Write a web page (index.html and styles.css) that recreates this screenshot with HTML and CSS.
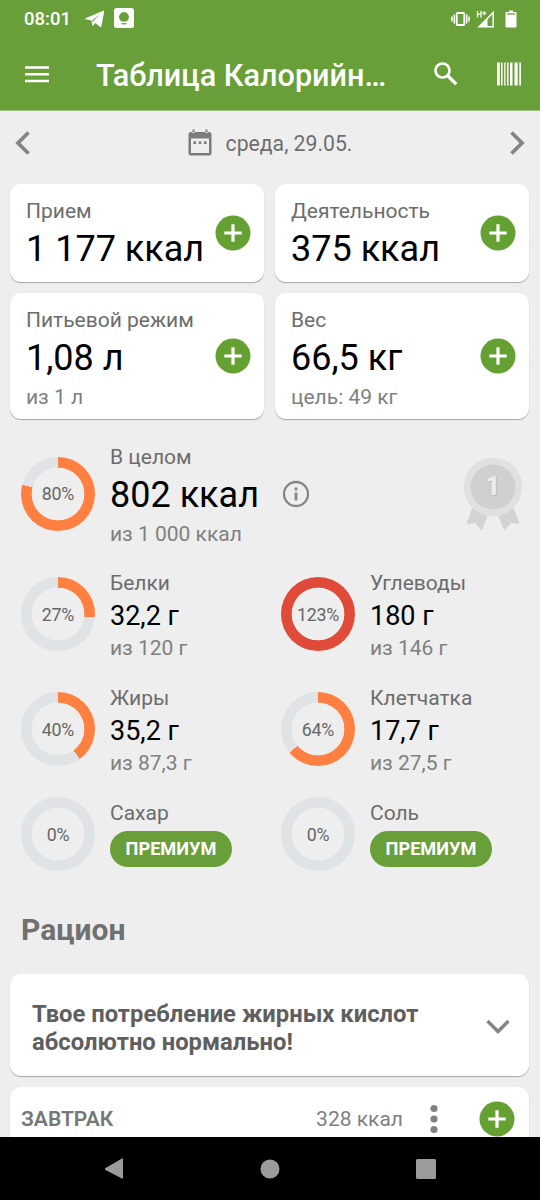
FILE: index.html
```
<!DOCTYPE html>
<html lang="ru">
<head>
	<meta charset="UTF-8">
	<meta name="viewport" content="width=device-width, initial-scale=1.0">
	<title>Таблица Калорийности</title>
	<link rel="stylesheet" href="styles.css">
</head>
<body>
	<svg class="sprite" width="0" height="0">
		<symbol id="plus" viewBox="0 0 36 36">
			<circle cx="18" cy="18" r="17.5" fill="#64a032"/>
			<path d="M18 9.3v17.4M9.3 18h17.4" stroke="#fff" stroke-width="3.2"/>
		</symbol>
	</svg>
	<div class="phone">
		<header class="header">
			<div class="status">
				<span class="clock">08:01</span>
				<svg class="telegram" width="20" height="18" viewBox="0 0 20 18">
					<path d="M.5 8.2 18.2.7c.8-.3 1.2.1 1 .9l-2.7 14.5c-.2.9-.8 1.1-1.5.6L10.300 13l-2.300 2.600c-.4.4-.7.3-.8-.2l-.7-5L.6 9.200C0 9 0 8.500.5 8.200zM7.300 10.200l.6 3 .6-2.400 7-6.800z"/>
				</svg>
				<svg class="app" width="20" height="20" viewBox="0 0 20 20">
					<rect width="20" height="20" rx="2.5"/>
					<path d="M7.600 13.500a5 5 0 1 1 4.800 0z" fill="#689f38"/>
					<path d="M7.500 15.700h5" stroke="#689f38" stroke-width="1.3"/>
				</svg>
				<svg class="vibrate" width="19" height="16" viewBox="0 0 19 16">
					<rect x="5.700" y="2" width="7.600" height="12" rx="1" fill="none" stroke="#fff" stroke-width="1.8"/>
					<path d="M3.300 3.500v9M1 5.500v5M15.700 3.500v9M18 5.500v5" stroke="#fff" stroke-width="1.5"/>
				</svg>
				<svg class="signal" width="19" height="18" viewBox="0 0 19 18">
					<path d="M3 16.700 17.200 2.500v14.200z" fill="none" stroke="#fff" stroke-width="1.5"/>
					<path d="M3 16.700 11.500 8.200v8.500z"/>
					<path d="M1.500 1v6.500M5 1v6.500M1.500 4.200H5M6.300 3.200h4M8.300 1.200v4" stroke="#fff" stroke-width="1.3"/>
				</svg>
				<svg class="battery" width="12" height="18" viewBox="0 0 12 18">
					<path d="M4 .5h4V2h2.500c.7 0 1 .4 1 1v13.300c0 .7-.3 1.200-1 1.200h-9c-.7 0-1-.5-1-1.200V3c0-.6.3-1 1-1H4z"/>
					<path d="M2 4h8" stroke="#689f38" stroke-width="1.3"/>
				</svg>
			</div>
			<div class="toolbar">
				<svg class="menu" width="26" height="18" viewBox="0 0 26 18">
					<path d="M1 2.500h24M1 9.300h24M1 16h24" stroke="#fff" stroke-width="2.5"/>
				</svg>
				<h1 class="title">Таблица Калорийн…</h1>
				<svg class="search" width="24" height="24" viewBox="0 0 24 24">
					<circle cx="8.500" cy="8.500" r="7" fill="none" stroke="#fff" stroke-width="2.7"/>
					<path d="m13.500 13.500 8.700 8.700" stroke="#fff" stroke-width="3.3"/>
				</svg>
				<svg class="barcode" width="26" height="24" viewBox="0 0 26 24">
					<path d="M1 .5h2.800v23H1zM5 .5h1.600v23H5zM8.200.5h1.300v23H8.200zM11 .5h1.500v23H11zM14 .5h2.500v23H14zM18.500.5h3.200v23h-3.200zM23.300.5h1.700v23h-1.700z"/>
				</svg>
			</div>
		</header>

		<main class="content">
			<div class="date-nav">
				<svg width="16" height="24" viewBox="0 0 16 24">
					<path d="M13.500 1.500 3 12l10.500 10.500" fill="none" stroke="#858585" stroke-width="3.8"/>
				</svg>
				<div class="date">
					<svg width="24" height="27" viewBox="0 0 24 27">
						<path d="M3 3h18a2.500 2.500 0 0 1 2.500 2.500V24a2.500 2.500 0 0 1-2.500 2.500H3A2.500 2.500 0 0 1 .5 24V5.500A2.500 2.500 0 0 1 3 3zm0 6.500V24h18V9.500zM4.500.5h2V4h-2zM17.500.5h2V4h-2z" fill="#7c7c7c" fill-rule="evenodd"/>
						<path d="M5.500 12.300h2.600v2.600H5.500zM10.700 12.300h2.600v2.600h-2.600zM15.900 12.300h2.600v2.600h-2.600z" fill="#7c7c7c"/>
					</svg>
					<span>среда, 29.05.</span>
				</div>
				<svg width="16" height="24" viewBox="0 0 16 24">
					<path d="M2.500 1.500 13 12 2.500 22.500" fill="none" stroke="#858585" stroke-width="3.8"/>
				</svg>
			</div>

			<div class="cards">
				<div class="card">
					<div>
						<div class="label">Прием</div>
						<div class="value">1 177 ккал</div>
					</div>
					<svg class="plus"><use href="#plus"/></svg>
				</div>
				<div class="card">
					<div>
						<div class="label">Деятельность</div>
						<div class="value">375 ккал</div>
					</div>
					<svg class="plus"><use href="#plus"/></svg>
				</div>
				<div class="card">
					<div>
						<div class="label">Питьевой режим</div>
						<div class="value">1,08 л</div>
						<div class="goal">из 1 л</div>
					</div>
					<svg class="plus"><use href="#plus"/></svg>
				</div>
				<div class="card">
					<div>
						<div class="label">Вес</div>
						<div class="value">66,5 кг</div>
						<div class="goal">цель: 49 кг</div>
					</div>
					<svg class="plus"><use href="#plus"/></svg>
				</div>
			</div>

			<div class="total">
				<div class="ring" style="--percent: 79"><span>80%</span></div>
				<div>
					<div class="label">В целом</div>
					<div class="value">802 ккал</div>
					<div class="goal">из 1 000 ккал</div>
				</div>
				<svg class="info" width="28" height="28" viewBox="0 0 28 28">
					<circle cx="14" cy="14" r="12" fill="none" stroke="#858585" stroke-width="2.3"/>
					<path d="M14 7.600v3M14 12.500v8" stroke="#858585" stroke-width="2.8"/>
				</svg>
				<svg class="medal" width="60" height="76" viewBox="0 0 60 76">
					<path d="m10 49-6.500 18 8.500-1 6.800 7.500 8-20zM50 49l6.500 18-8.500-1-6.800 7.500-8-20z" fill="#d3d3d3"/>
					<circle cx="30" cy="30" r="29.3" fill="#e0e0e0"/>
					<circle cx="30" cy="30" r="22.5" fill="#d0d0d0"/>
					<text x="31" y="39" class="medal-shade">1</text>
					<text x="30" y="38" class="medal-number">1</text>
				</svg>
			</div>

			<div class="nutrients">
				<div class="nutrient">
					<div class="ring" style="--percent: 26.5"><span>27%</span></div>
					<div>
						<div class="label">Белки</div>
						<div class="amount">32,2 г</div>
						<div class="goal">из 120 г</div>
					</div>
				</div>
				<div class="nutrient">
					<div class="ring over" style="--percent: 100"><span>123%</span></div>
					<div>
						<div class="label">Углеводы</div>
						<div class="amount">180 г</div>
						<div class="goal">из 146 г</div>
					</div>
				</div>
				<div class="nutrient">
					<div class="ring" style="--percent: 40"><span>40%</span></div>
					<div>
						<div class="label">Жиры</div>
						<div class="amount">35,2 г</div>
						<div class="goal">из 87,3 г</div>
					</div>
				</div>
				<div class="nutrient">
					<div class="ring" style="--percent: 64"><span>64%</span></div>
					<div>
						<div class="label">Клетчатка</div>
						<div class="amount">17,7 г</div>
						<div class="goal">из 27,5 г</div>
					</div>
				</div>
				<div class="nutrient locked">
					<div class="ring" style="--percent: 0"><span>0%</span></div>
					<div>
						<div class="label">Сахар</div>
						<div class="premium">ПРЕМИУМ</div>
					</div>
				</div>
				<div class="nutrient locked">
					<div class="ring" style="--percent: 0"><span>0%</span></div>
					<div>
						<div class="label">Соль</div>
						<div class="premium">ПРЕМИУМ</div>
					</div>
				</div>
			</div>

			<h2 class="section-title">Рацион</h2>

			<div class="tip">
				<p>Твое потребление жирных кислот абсолютно нормально!</p>
				<svg width="24" height="16" viewBox="0 0 24 16">
					<path d="M1.500 2 12 12.500 22.500 2" fill="none" stroke="#858585" stroke-width="3.5"/>
				</svg>
			</div>

			<div class="meal">
				<span class="meal-name">ЗАВТРАК</span>
				<span class="meal-energy">328 ккал</span>
				<svg class="dots" width="8" height="30" viewBox="0 0 8 30">
					<circle cx="4" cy="4.5" r="3.6"/>
					<circle cx="4" cy="15" r="3.6"/>
					<circle cx="4" cy="25.5" r="3.6"/>
				</svg>
				<svg class="plus"><use href="#plus"/></svg>
			</div>
		</main>

		<nav class="system-nav">
			<svg width="20" height="22" viewBox="0 0 20 22"><path d="M1.500 10 18 .5q1-.5 1 .5v19q0 1-1 .5L1.500 12q-1.500-1 0-2z"/></svg>
			<svg width="20" height="22" viewBox="0 0 20 22"><circle cx="10" cy="11" r="9.5"/></svg>
			<svg width="20" height="22" viewBox="0 0 20 22"><rect y="1" width="20" height="20" rx="1.5"/></svg>
		</nav>
	</div>
</body>
</html>
```
FILE: styles.css
```
html, body {
	padding: 0;
	margin: 0;
}

body {
	font-family: Roboto, sans-serif;
	font-size: 21px;
	line-height: 28px;
	color: #6f6f6f;
	background: #000;
}

svg {
	display: block;
	flex: none;
}

.sprite {
	position: absolute;
}

.phone {
	display: flex;
	flex-direction: column;
	width: 540px;
	height: 1200px;
	overflow: hidden;
	background: #eee;
}


/* Header */

.header {
	flex: none;
	height: 111px;
	box-sizing: border-box;
	border-bottom: 1px solid #9dbf80;
	color: #fff;
	background: #689f38;
}

.header svg {
	fill: #fff;
}

.status {
	display: flex;
	align-items: center;
	height: 37px;
	padding: 0 23px 0 24px;
}

.clock {
	width: 61px;
	margin-top: 1px;
	font-size: 18.5px;
	font-weight: 500;
}

.app {
	margin: -1px auto 0 9px;
}

.signal {
	margin: 0 10px 0 6px;
}

.toolbar {
	display: flex;
	align-items: center;
	height: 74px;
	padding: 0 18px 0 24px;
}

.title {
	flex: 1;
	margin: 4px 0 0 46px;
	font-size: 30.6px;
	font-weight: 500;
	line-height: 36px;
	white-space: nowrap;
}

.barcode {
	margin-left: 38px;
}


/* Content */

.content {
	flex: 1;
	min-height: 0;
	overflow: hidden;
}

.date-nav {
	display: flex;
	align-items: center;
	justify-content: space-between;
	height: 63px;
	padding: 0 15px;
}

.date {
	display: flex;
	align-items: center;
	gap: 14px;
}

.date span {
	margin-top: 3px;
	font-size: 21.2px;
}

.cards {
	display: grid;
	grid-template-columns: 1fr 1fr;
	grid-template-rows: 98px 126px;
	gap: 11px;
	padding: 10px 11px 0 10px;
}

.card, .tip, .meal {
	display: flex;
	align-items: center;
	border-radius: 11px;
	background: #fff;
	box-shadow: 0 1px 1px rgba(0, 0, 0, .3);
}

.card {
	justify-content: space-between;
	padding: 0 13px 0 16px;
	white-space: nowrap;
}

.card .label {
	padding-top: 4px;
}

.plus {
	width: 36px;
	height: 36px;
}

.label {
	color: #6c6c6c;
}

.goal {
	color: #808080;
}

.value {
	font-size: 36px;
	line-height: 49px;
	color: #000;
}

.amount {
	padding-top: 1px;
	font-size: 27px;
	line-height: 36px;
	color: #000;
}

.total {
	display: flex;
	align-items: center;
	height: 104px;
	padding: 24px 17px 0 21px;
}

.total .ring, .info {
	margin-top: -3px;
}

.total .value {
	margin-right: 23px;
}

.medal {
	margin: -1px 0 0 auto;
}

.medal text {
	font-size: 26px;
	font-weight: 700;
	text-anchor: middle;
}

.medal-number {
	fill: #eee;
}

.medal-shade {
	fill: #bbb;
}

.ring {
	display: flex;
	flex: none;
	align-items: center;
	justify-content: center;
	width: 74px;
	height: 74px;
	margin-right: 15px;
	border-radius: 50%;
	font-size: 17.8px;
	letter-spacing: -.2px;
	color: #666;
	background:
		radial-gradient(circle, #eee 26px, transparent 26.7px),
		conic-gradient(#ff8040 calc(var(--percent) * 1%), #dfe3e6 0);
}

.ring span {
	margin-top: 1px;
}

.ring.over {
	background:
		radial-gradient(circle, #eee 26px, transparent 26.7px),
		#e04a38;
}

.nutrients {
	display: grid;
	grid-template-columns: 260px 1fr;
	grid-template-rows: 93px 93px 74px;
	row-gap: 22px;
	padding: 22px 0 0 21px;
}

.nutrient {
	display: flex;
	align-items: flex-start;
}

.nutrient .ring {
	margin-top: 8px;
}

.locked .ring {
	margin-top: -2px;
}

.premium {
	width: 122px;
	margin-top: 4px;
	border-radius: 18px;
	font-size: 18.2px;
	font-weight: 700;
	line-height: 36px;
	text-align: center;
	color: #fff;
	background: #689f38;
}

.section-title {
	margin: 39px 0 26px 21px;
	font-size: 30px;
	font-weight: 700;
	line-height: 36px;
	color: #707070;
}

.tip {
	justify-content: space-between;
	height: 102px;
	margin: 0 11px 11px 10px;
	padding: 0 19px 0 22px;
	box-sizing: border-box;
}

.tip svg {
	margin-top: 3px;
}

.tip p {
	width: 400px;
	margin: 5px 0 0;
	font-size: 23.8px;
	font-weight: 700;
	color: #5f5f5f;
}

.meal {
	height: 63px;
	margin: 0 11px 0 10px;
	padding: 0 14px 0 11px;
}

.meal-name {
	flex: 1;
	font-weight: 600;
	color: #777;
}

.meal-energy {
	color: #808080;
}

.dots {
	margin: 0 41px 0 27px;
	fill: #808080;
}

.system-nav {
	display: flex;
	flex: none;
	align-items: center;
	justify-content: space-between;
	height: 63px;
	box-sizing: border-box;
	padding: 0 104px;
	background: #000;
}

.system-nav svg {
	fill: #9b9b9b;
}
```
